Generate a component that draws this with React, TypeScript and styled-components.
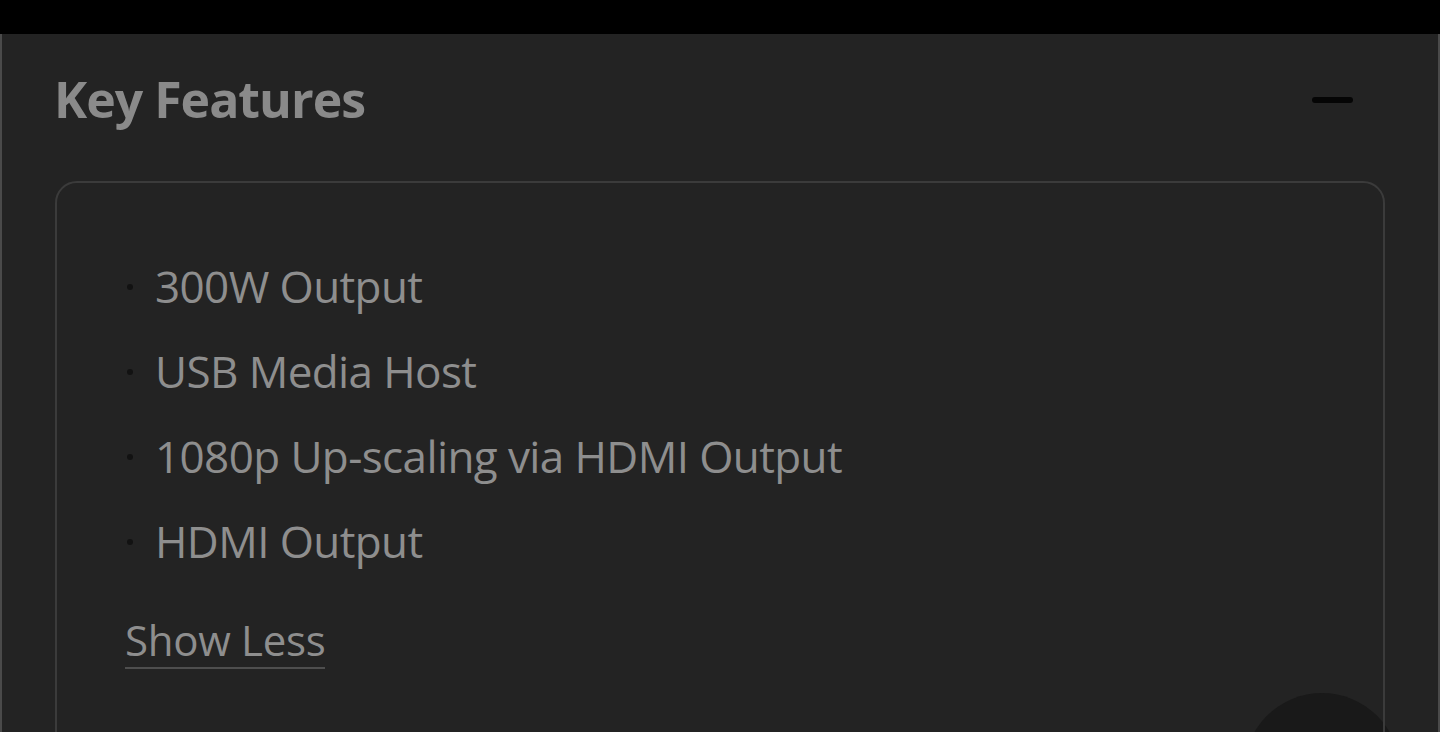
import React from "react";
import styled, { createGlobalStyle } from "styled-components";

const Global = createGlobalStyle`
  html, body {
    margin: 0;
    padding: 0;
    background: #232323;
    font-family: "Open Sans", "Noto Sans", Arial, sans-serif;
  }
  * { box-sizing: border-box; }
`;

const Page = styled.div`
  width: 1440px;
  height: 732px;
  overflow: hidden;
  display: flex;
  flex-direction: column;
  background: #232323;
  position: relative;
`;

const TopBar = styled.div`
  height: 34px;
  background: #000;
  flex: none;
`;

const Panel = styled.section`
  flex: 1;
  border-left: 2px solid #4a4a4a;
  border-right: 2px solid #4a4a4a;
  padding: 31px 0 0 52px;
  position: relative;
`;

const HeaderRow = styled.div`
  display: flex;
  align-items: center;
  justify-content: space-between;
  padding-right: 85px;
`;

const Title = styled.h2`
  margin: 0;
  font-size: 50px;
  font-weight: 700;
  color: #8a8a8a;
  letter-spacing: -1px;
  line-height: normal;
`;

const MinusButton = styled.button`
  width: 41px;
  height: 6px;
  border: none;
  border-radius: 3px;
  background: #050505;
  padding: 0;
  margin-top: 2px;
`;

const Card = styled.div`
  position: relative;
  z-index: 1;
  margin: 48px 0 0 1px;
  width: 1330px;
  height: 620px;
  border: 2px solid #3b3b3b;
  border-radius: 22px;
  padding: 61px 0 0 70px;
`;

const List = styled.ul`
  list-style: none;
  margin: 0;
  padding: 0;
`;

const Item = styled.li`
  display: flex;
  align-items: center;
  height: 85px;
  line-height: 85px;
  font-size: 44px;
  letter-spacing: -0.6px;
  color: #8e8e8e;
`;

const Bullet = styled.span`
  width: 6px;
  height: 6px;
  border-radius: 50%;
  background: #121212;
  margin-right: 22px;
  flex: none;
`;

const ShowLess = styled.a`
  display: inline-block;
  margin: 31px 0 0 -2px;
  font-size: 42px;
  color: #8e8e8e;
  line-height: 1.2;
  letter-spacing: -0.3px;
  text-decoration: none;
  border-bottom: 2px solid #4e4e4e;
  padding-bottom: 2px;
`;

const FloatingCircle = styled.div`
  position: absolute;
  left: 1244px;
  top: 693px;
  width: 156px;
  height: 156px;
  border-radius: 50%;
  background: #191919;
  z-index: 0;
`;

const features = [
  "300W Output",
  "USB Media Host",
  "1080p Up-scaling via HDMI Output",
  "HDMI Output",
];

export default function App() {
  return (
    <Page>
      <Global />
      <TopBar />
      <FloatingCircle />
      <Panel>
        <HeaderRow>
          <Title>Key Features</Title>
          <MinusButton aria-label="Collapse" />
        </HeaderRow>
        <Card>
          <List>
            {features.map((f) => (
              <Item key={f}>
                <Bullet />
                {f}
              </Item>
            ))}
          </List>
          <ShowLess href="#">Show Less</ShowLess>
        </Card>
      </Panel>
    </Page>
  );
}
